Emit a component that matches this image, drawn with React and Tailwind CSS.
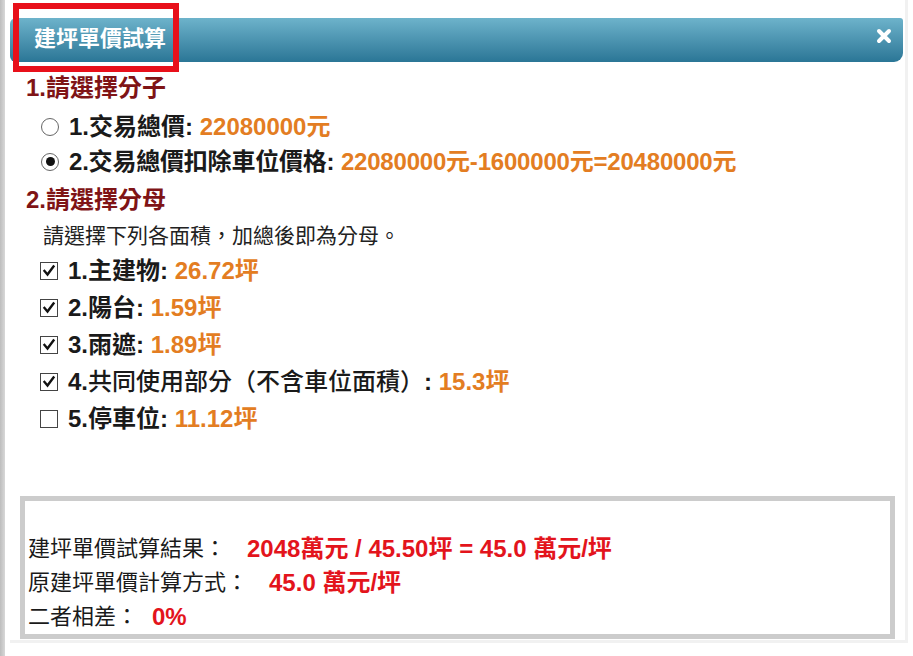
import React from "react";

const F = "font-[family-name:'Liberation_Sans','Noto_Sans_CJK_TC',sans-serif]";

function Radio({ checked }) {
  return (
    <span className="w-[18px] h-[18px] rounded-full border-[1.5px] border-[#666] bg-white flex items-center justify-center shrink-0">
      {checked && <span className="w-[9px] h-[9px] rounded-full bg-[#111]" />}
    </span>
  );
}

function Check({ checked }) {
  return (
    <span className="w-[18px] h-[18px] border-[1.5px] border-[#444] bg-white flex items-center justify-center shrink-0">
      {checked && (
        <svg width="14" height="14" viewBox="0 0 14 14">
          <path d="M2.5 7 L5.5 10.5 L11.5 2.5" fill="none" stroke="#111" strokeWidth="2.4" strokeLinecap="square" strokeLinejoin="miter" />
        </svg>
      )}
    </span>
  );
}

const O = "text-[#e37d22] font-bold";

export default function App() {
  const items = [
    { c: true, label: <>1.主建物:</>, v: "26.72坪" },
    { c: true, label: <>2.陽台:</>, v: "1.59坪" },
    { c: true, label: <>3.雨遮:</>, v: "1.89坪" },
    { c: true, label: <>4.<span className="font-medium">共同使用部分（不含車位面積）</span>:</>, v: "15.3坪" },
    { c: false, label: <>5.停車位:</>, v: "11.12坪" },
  ];
  return (
    <div className={`w-[913px] h-[656px] bg-white relative overflow-hidden flex ${F} text-[#1a1a1a]`}>
      <div className="w-[5px] h-full bg-gradient-to-r from-[#bdbdbd] to-[#d8d8d8]" />
      <div className="ml-[5px] w-[898px] h-[643px] flex flex-col border-r-[3px] border-b-[3px] border-[#f1f1f1]">
        <div className="mt-[18px] h-[44px] w-[893px] rounded-l-[6px] rounded-tr-[3px] rounded-br-[9px] bg-gradient-to-b from-[#6db3cb] to-[#2a7696] flex items-center justify-between pl-[24px] pr-[11px]">
          <span className="text-white font-bold text-[22px] leading-none -mt-[3px]">建坪單價試算</span>
          <svg width="16" height="16" viewBox="0 0 16 16" className="-mt-[8px]">
            <path d="M3 3 L13 13 M13 3 L3 13" stroke="white" strokeWidth="4" strokeLinecap="round" />
          </svg>
        </div>

        <div className="mt-[8px] h-[36px] pl-[16px] flex items-center text-[24px] font-bold text-[#7f1416] leading-none">1.請選擇分子</div>
        <div className="mt-[3px] h-[35px] pl-[31px] flex items-center gap-[10px] text-[24px] font-bold leading-none">
          <Radio checked={false} />
          <span>1.交易總價: <span className={O}>22080000元</span></span>
        </div>
        <div className="h-[35px] pl-[31px] flex items-center gap-[10px] text-[24px] font-bold leading-none">
          <Radio checked={true} />
          <span className="tracking-[-0.2px]">2.交易總價扣除車位價格: <span className={O}>22080000元-1600000元=20480000元</span></span>
        </div>
        <div className="mt-[3px] h-[36px] pl-[16px] flex items-center text-[24px] font-bold text-[#7f1416] leading-none">2.請選擇分母</div>
        <div className="h-[34px] pl-[33px] flex items-center text-[21px] leading-none text-[#222]">請選擇下列各面積，加總後即為分母。</div>
        {items.map((it, i) => (
          <div key={i} className="h-[37px] pl-[30px] flex items-center gap-[10px] text-[24px] font-bold leading-none">
            <Check checked={it.c} />
            <span>{it.label} <span className={O}>{it.v}</span></span>
          </div>
        ))}

        <div className="mt-[59px] ml-[10px] w-[875px] h-[143px] border-[5px] border-[#cccccc] bg-white flex flex-col pt-[31px] pl-[3px] text-[22px] leading-none text-[#1a1a1a]">
          <div className="h-[34px] flex items-center">建坪單價試算結果：<span className="ml-[21px] text-[24px] text-[#e3141c] font-bold">2048萬元 / 45.50坪 = 45.0 萬元/坪</span></div>
          <div className="h-[34px] flex items-center">原建坪單價計算方式：<span className="ml-[21px] text-[24px] text-[#e3141c] font-bold">45.0 萬元/坪</span></div>
          <div className="h-[34px] flex items-center">二者相差：<span className="ml-[14px] text-[24px] text-[#e3141c] font-bold">0%</span></div>
        </div>
      </div>

      <div className="absolute left-[13px] top-[3px] w-[166px] h-[69px] border-[6px] border-[#e8101a]" />
    </div>
  );
}
